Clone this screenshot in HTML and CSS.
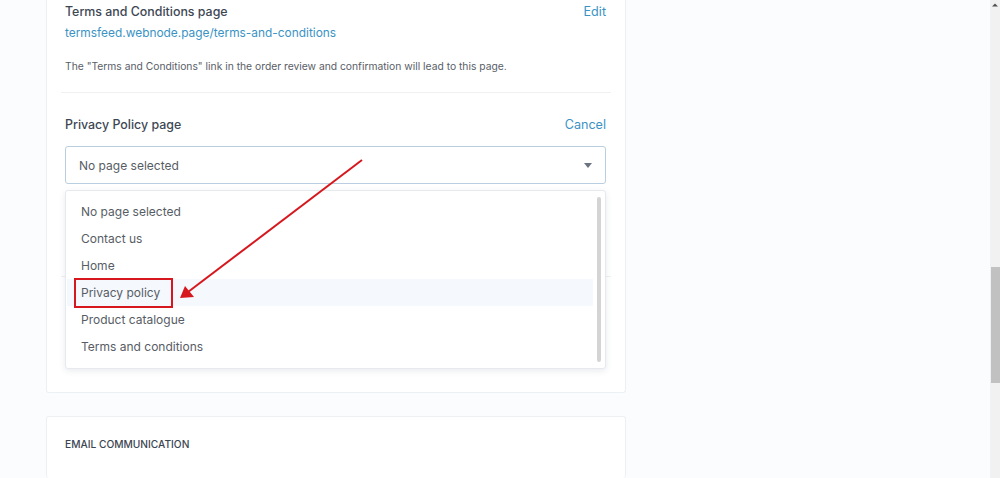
FILE: index.html
```html
<!DOCTYPE html>
<html>
<head>
<meta charset="utf-8">
<link rel="stylesheet" href="styles.css">
</head>
<body>
<div class="screen">
  <main class="main">
    <section class="card card-top">
      <div class="block">
        <div class="row">
          <span class="label">Terms and Conditions page</span>
          <a class="action">Edit</a>
        </div>
        <a class="url">termsfeed.webnode.page/terms-and-conditions</a>
        <p class="hint">The "Terms and Conditions" link in the order review and confirmation will lead to this page.</p>
      </div>
      <hr class="sep">
      <div class="block block-privacy">
        <div class="row">
          <span class="label">Privacy Policy page</span>
          <a class="action">Cancel</a>
        </div>
        <div class="select-wrap">
          <div class="select">
            <span>No page selected</span>
            <svg class="caret" width="8" height="5" viewBox="0 0 8 5"><path d="M0 0h8L4 5z" fill="#6b7480"/></svg>
          </div>
          <ul class="menu">
            <li>No page selected</li>
            <li>Contact us</li>
            <li>Home</li>
            <li class="hover">Privacy policy</li>
            <li>Product catalogue</li>
            <li>Terms and conditions</li>
            <span class="menu-scroll"></span>
          </ul>
        </div>
      </div>
      <hr class="sep sep-hidden">
    </section>
    <section class="card card-email">
      <h3 class="caps">EMAIL COMMUNICATION</h3>
    </section>
  </main>
  <div class="scrollbar">
    <svg class="sb-arrow" width="10" height="10" viewBox="0 0 10 10"><path d="M2 6.5h6L5 3.5z" fill="#505050"/></svg>
    <div class="sb-thumb"></div>
  </div>
</div>
<svg class="annot" width="1000" height="478" viewBox="0 0 1000 478">
  <rect x="75" y="279" width="97" height="28" fill="none" stroke="#d6181e" stroke-width="2"/>
  <line x1="362" y1="160" x2="188" y2="292" stroke="#d6181e" stroke-width="2"/>
  <path d="M180 298 L185 286 L194 297 Z" fill="#d6181e"/>
</svg>
</body>
</html>
```

FILE: styles.css
```css
html, body {
  margin: 0;
  padding: 0;
}
body {
  width: 1000px;
  height: 478px;
  overflow: hidden;
  background: #fbfcfd;
  font-family: Inter, "Noto Sans", sans-serif;
  color: #3b4552;
  position: relative;
}
.screen {
  display: flex;
  height: 478px;
}
.main {
  flex: 1;
  padding-left: 46px;
  display: flex;
  flex-direction: column;
  gap: 23px;
}
.card {
  width: 580px;
  box-sizing: border-box;
  background: #fff;
  border: 1px solid #edf0f3;
  border-radius: 3px;
}
.card-top {
  border-top: none;
  border-radius: 0 0 3px 3px;
  height: 393px;
  flex: none;
}
.block {
  padding: 0 19px 0 18px;
}
.row {
  display: flex;
  justify-content: space-between;
  align-items: center;
  height: 18px;
}
.card-top .block:first-child {
  padding-top: 2px;
}
.label {
  font-size: 12.4px;
  font-weight: 500;
  color: #3d4754;
}
.action {
  font-size: 12.6px;
  color: #3b93c4;
}
.url {
  display: block;
  margin-top: 4px;
  font-size: 11.9px;
  line-height: 18px;
  color: #3b93c4;
}
.hint {
  margin: 17px 0 0;
  font-size: 10.3px;
  line-height: 14px;
  color: #5a6068;
}
.sep {
  margin: 19px 14px 0;
  border: none;
  border-top: 1px solid #eef0f2;
  height: 0;
}
.block-privacy {
  padding-top: 22px;
}
.select-wrap {
  position: relative;
  margin-top: 13px;
}
.select {
  height: 36px;
  border: 1px solid #b9cfe1;
  border-radius: 3px;
  display: flex;
  align-items: center;
  justify-content: space-between;
  padding: 0 13px 0 13px;
  font-size: 12px;
  color: #575d65;
}
.menu {
  position: absolute;
  left: 0;
  right: 0;
  top: 44px;
  margin: 0;
  padding: 7px 12px 8px 1px;
  list-style: none;
  background: #fff;
  border: 1px solid #e6eaee;
  border-radius: 3px;
  box-shadow: 0 2px 6px rgba(40, 60, 90, 0.10);
  z-index: 2;
}
.menu li {
  height: 27px;
  line-height: 27px;
  padding-left: 14px;
  font-size: 12px;
  color: #575d65;
}
.menu li.hover {
  background: #f5f8fc;
}
.menu-scroll {
  position: absolute;
  right: 4px;
  top: 6px;
  bottom: 6px;
  width: 4px;
  border-radius: 2px;
  background: #d4d4d4;
}
.sep-hidden {
  margin-top: 92px;
}
.card-email {
  flex: 1;
  border-bottom: none;
}
.caps {
  margin: 21px 19px 0 18px;
  font-size: 10.2px;
  font-weight: 500;
  color: #3b4552;
}
.scrollbar {
  width: 10px;
  margin-left: -10px;
  background: #f1f1f1;
  position: relative;
  display: flex;
  flex-direction: column;
}
.sb-arrow {
  display: block;
}
.sb-thumb {
  margin-top: 257px;
  height: 116px;
  width: 9px;
  margin-left: 1px;
  background: #c1c1c1;
}
.annot {
  position: absolute;
  left: 0;
  top: 0;
  pointer-events: none;
  z-index: 5;
}
```
